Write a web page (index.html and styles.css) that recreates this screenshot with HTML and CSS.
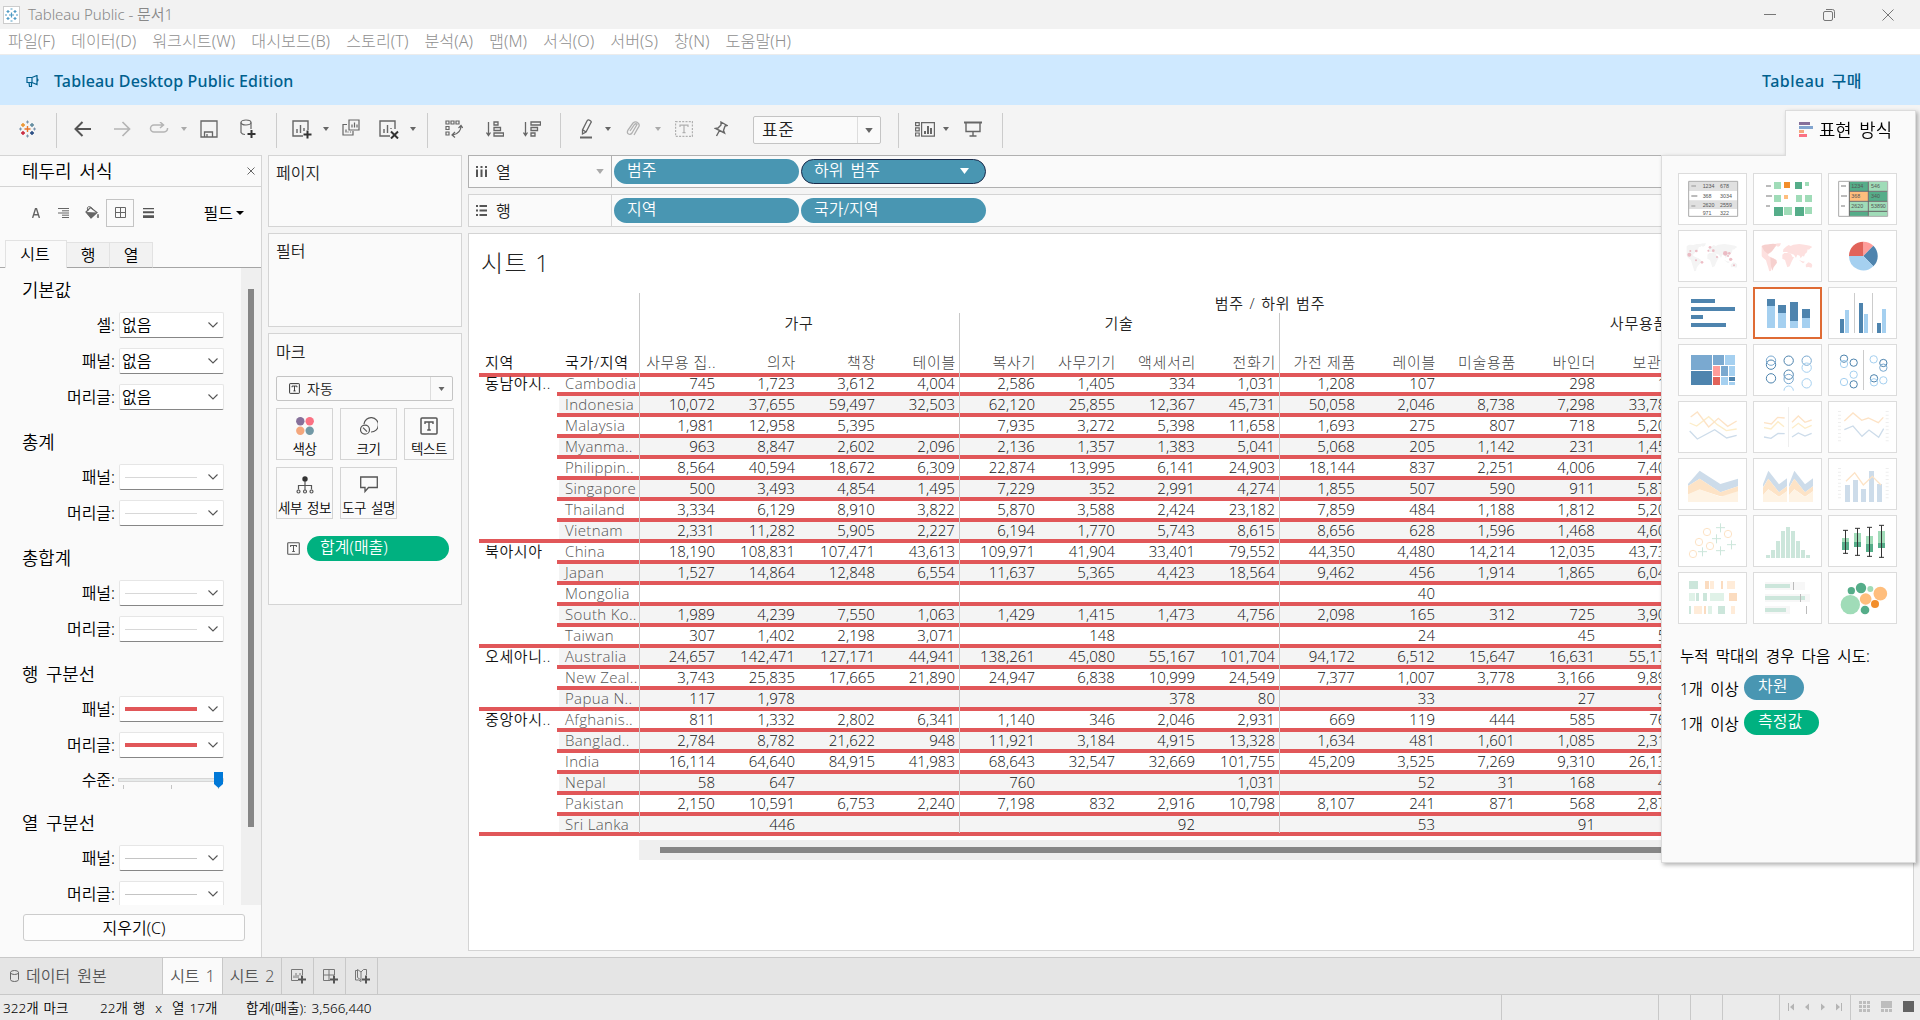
FILE: index.html
```html
<!DOCTYPE html>
<html lang="ko">
<head>
<meta charset="utf-8">
<title>Tableau Public - 문서1</title>
<link rel="stylesheet" href="styles.css">
</head>
<body>
<svg class="defs" width="0" height="0">
  <symbol id="caret" viewBox="0 0 6 4"><path d="M0 0h6L3 4z" fill="currentColor"/></symbol>
  <symbol id="chev" viewBox="0 0 10 6"><path d="M.5 .5L5 5L9.500 .5" fill="none" stroke="#555" stroke-width="1.100"/></symbol>
  <symbol id="tbox" viewBox="0 0 18 18"><rect x="1" y="1" width="16" height="16" rx="1" fill="none" stroke="currentColor" stroke-width="1.500"/><path d="M5 7V5h8v2M9 5v8M7.200 13h3.600" fill="none" stroke="currentColor" stroke-width="1.400"/></symbol>
  <symbol id="world" viewBox="0 0 152 84"><path d="M0 8l8-4 12 1 10-3 14-1 4 3-6 6-6 2-2 8-8 6-4 6-4 2 4 5 6 3 8 3 8 6-2 8-6 6-6 8-2 10-5 2-3-12-4-12-3-10-8-7-6-6-5-8-3-10-4-6zM44 0l14-1-3 8-7 4zM62 34l6-5 12 0 8 3 4 8 5 2-5 9-4 8-4 10-7 3-4-12-3-10-8-4zM64 26l1-8 8-8 8-5 6 3 8-4 18-2 16 2 16 3 7 4-6 4-4 4-4-1-2 9-6 5-3 8-4-3-6 8-3-8-7-3-4 10-6-10-8-3-8-2-6-3zM132 64l8-7 8 3 5 6-4 7-8-2-8 1zM112 50l10 4 8 1-6 5z"/></symbol>
</svg>

<header class="titlebar">
  <svg class="app-icon" width="17" height="18" viewBox="0 0 17 18"><rect x=".5" y=".5" width="16" height="17" fill="#fff" stroke="#ccc"/><g stroke="#4f9bc4" stroke-width="1.200"><path d="M6 9h5M8.500 6.500v5M3.500 5.500h3M5 4v3M10.500 5.500h3M12 4v3M3.500 12.500h3M5 11v3M10.500 12.500h3M12 11v3M7.500 3h2M7.500 15h2M2 9h2M13 9h2"/></g></svg>
  <span>Tableau Public - 문서1</span>
  <div class="window-buttons">
    <svg width="12" height="12" viewBox="0 0 12 12"><path d="M0 5.500h12" stroke="#777"/></svg>
    <svg width="12" height="12" viewBox="0 0 12 12" fill="none" stroke="#777"><rect x=".5" y="2.500" width="9" height="9" rx="1.500"/><path d="M3 .5h6.500a2 2 0 0 1 2 2V9"/></svg>
    <svg width="12" height="12" viewBox="0 0 12 12" stroke="#777"><path d="M.5 .5l11 11M11.500 .5l-11 11"/></svg>
  </div>
</header>
<nav class="menubar">
  <span>파일(F)</span><span>데이터(D)</span><span>워크시트(W)</span><span>대시보드(B)</span><span>스토리(T)</span><span>분석(A)</span><span>맵(M)</span><span>서식(O)</span><span>서버(S)</span><span>창(N)</span><span>도움말(H)</span>
</nav>
<div class="banner">
  <svg width="14" height="12" viewBox="0 0 14 12" fill="none" stroke="#00608e" stroke-width="1.200"><path d="M1 2.500h5l5-2v9l-5-2H1zM6 2.500v5M3 7.500l.5 4h2v-4M11 3.500q2 1.500 0 3"/></svg>
  <b>Tableau Desktop Public Edition</b>
  <b class="buy">Tableau 구매</b>
</div>

<div class="toolbar">
  <div class="group g1">
    <svg width="17" height="18" viewBox="0 0 17 18" stroke-width="1.400"><path d="M5.500 9h6M8.500 6v6" stroke="#e8762c"/><path d="M2 5h4M4 3v4" stroke="#eb9129"/><path d="M11 5h4M13 3v4" stroke="#5b879b"/><path d="M2 13h4M4 11v4" stroke="#c72037"/><path d="M11 13h4M13 11v4" stroke="#1f447e"/><path d="M7 2h3M8.500 .5v3M7 16h3M8.500 14.500v3M0 9h3M1.500 7.500v3M14 9h3M15.500 7.500v3" stroke="#7b93ab" stroke-width="1"/></svg>
  </div>
  <div class="group g2">
    <svg width="18" height="16" viewBox="0 0 18 16" fill="none" stroke="#555" stroke-width="2"><path d="M17 8H2M8.500 1L1.500 8l7 7"/></svg>
    <svg width="18" height="16" viewBox="0 0 18 16" fill="none" stroke="#b4b4b4" stroke-width="1.700"><path d="M1 8h15M9.500 1l7 7-7 7"/></svg>
    <svg class="lift" width="20" height="11" viewBox="0 0 20 11" fill="none" stroke="#b4b4b4" stroke-width="1.500"><path d="M14 3H5a3.500 3.500 0 0 0 0 7h10a3.500 3.500 0 0 0 3.500-4M11 0l3.500 3L11 6"/></svg>
    <svg class="dim" width="6" height="4"><use href="#caret"/></svg>
    <svg width="18" height="18" viewBox="0 0 18 18" fill="none" stroke="#666" stroke-width="1.300"><path d="M1 1h16v16H1zM4.500 17v-5h8v5M7 17v-3"/></svg>
    <svg width="16" height="20" viewBox="0 0 16 20" fill="none" stroke="#666" stroke-width="1.200"><ellipse cx="6" cy="3.500" rx="5" ry="2.500"/><path d="M1 3.500v10q1 2 4 2M11 3.500V10"/><path d="M11.500 11v8M7.500 15h8" stroke="#333" stroke-width="2"/></svg>
  </div>
  <div class="group g3">
    <svg width="20" height="19" viewBox="0 0 20 19" fill="none" stroke="#666" stroke-width="1.400"><path d="M11 16H1V1h15v9M5 13V9M8.500 13V5M12 11V8"/><path d="M15.500 10.500v8M11.500 14.500h8" stroke="#333" stroke-width="2"/></svg>
    <svg width="6" height="4"><use href="#caret"/></svg>
    <svg class="lift" width="18" height="17" viewBox="0 0 18 17" fill="none" stroke="#666" stroke-width="1.200"><path d="M5 5.500H1v10.500h10v-4M7 1h10v10H7zM4 13.500v-3M6 13.500v-1M8.500 13.500v-1M10 8.500v-3M12.500 8.500v-5M15 8.500v-3"/></svg>
    <svg width="20" height="19" viewBox="0 0 20 19" fill="none" stroke="#666" stroke-width="1.400"><path d="M11 16H1V1h15v8M5 13V9M8.500 13V5M12 9V8"/><path d="M12 11.500l7 7M19 11.500l-7 7" stroke="#333" stroke-width="2"/></svg>
    <svg width="6" height="4"><use href="#caret"/></svg>
  </div>
  <div class="group g4">
    <svg width="18" height="18" viewBox="0 0 18 18" fill="none" stroke="#666" stroke-width="1.200"><path d="M1 1h3v3H1zM6 1h3v3H6zM11 1h3v3h-3zM1 6.500h3v3H1zM1 12h3v3H1zM16 6q0 7-8 9M13.500 8L16 5.500 17.700 8M10 12l-3 3 3 2.500"/></svg>
    <svg width="18" height="16" viewBox="0 0 18 16" fill="none" stroke="#666" stroke-width="1.300"><path d="M2.500 1v13M.5 11.500l2 3 2-3M8 1h4v3H8zM8 6.500h6.500v3H8zM8 12h9.500v3H8z"/></svg>
    <svg width="18" height="16" viewBox="0 0 18 16" fill="none" stroke="#666" stroke-width="1.300"><path d="M2.500 1v13M.5 11.500l2 3 2-3M8 1h9.500v3H8zM8 6.500h6.500v3H8zM8 12h4v3H8z"/></svg>
  </div>
  <div class="group g5">
    <svg width="14" height="20" viewBox="0 0 14 20" fill="none" stroke="#666" stroke-width="1.300"><path d="M8 2q1-2 3-.5t1 2L7 13l-3.500 2V11zM4 11l3 2"/><path d="M1 18.500h12" stroke-width="2"/></svg>
    <svg width="6" height="4"><use href="#caret"/></svg>
    <svg width="14" height="16" viewBox="0 0 14 16" fill="none" stroke="#b0b0b0" stroke-width="1.300"><path d="M4 10l4.500-6.500q1.500-1.500 2.500 0L6 12q-1.500 2-3.500 1T2 9l5-7q2.500-2.200 5 0t0 5L8 14"/></svg>
    <svg class="dim" width="6" height="4"><use href="#caret"/></svg>
    <svg width="18" height="16" viewBox="0 0 18 16" fill="none" stroke="#b0b0b0" stroke-width="1.200"><path d="M.6.6h16.800v14.800H.6z" stroke-dasharray="2 1.300"/><path d="M5 6V4.200h8V6M9 4.200v7.500M7.500 11.700h3"/></svg>
    <svg width="14" height="16" viewBox="0 0 14 16" fill="none" stroke="#666" stroke-width="1.400"><path d="M7 1l6 3.500-2 .5-1.500 4.500 1 2.500L1.500 7.500 4 7l3-3zM5.500 9.500L2.500 15"/></svg>
    <div class="combo"><span>표준</span><i><svg width="8" height="5"><use href="#caret"/></svg></i></div>
  </div>
  <div class="group g6">
    <svg width="20" height="15" viewBox="0 0 20 15" fill="none" stroke="#666" stroke-width="1.200"><path d="M.6.6h3.600v3H.6zM.6 5.800h3.600v3H.6zM.6 11h3.600v3H.6zM6.600.6h12.800v13.600H6.600z"/><path d="M10 12V9M13 12V4M16 12V6" stroke-width="2"/></svg>
    <svg width="6" height="4"><use href="#caret"/></svg>
    <svg width="18" height="16" viewBox="0 0 18 16" fill="none" stroke="#666" stroke-width="1.400"><path d="M0 1.500h18" stroke-width="2"/><path d="M2 2v8.500h14V2M9 10.500V15M5.500 15h7"/></svg>
  </div>
</div>

<main class="main">
  <aside class="format">
    <div class="format-title"><span>테두리 서식</span><svg width="8" height="8" viewBox="0 0 8 8" stroke="#666"><path d="M.5.5l7 7M7.500.5l-7 7"/></svg></div>
    <div class="format-icons">
      <svg width="8" height="10" viewBox="0 0 8 10" fill="none" stroke="#666" stroke-width="1.400"><path d="M.6 10L3.500.8h1L7.400 10M1.700 6.800h4.600"/></svg>
      <svg width="11" height="10" viewBox="0 0 11 10" stroke="#666"><path d="M0 .5h11M4 2.800h7M0 5h11M4 7.200h7M4 9.500h7"/></svg>
      <svg width="14" height="13" viewBox="0 0 14 13"><path d="M1 6l4.500-4.500 6.500 5L6 12z" fill="none" stroke="#666" stroke-width="1.200"/><path d="M1 6l11 .5L6 12.500z" fill="#666"/><path d="M3 5Q1 0 5 .8q2 .5 3 3" fill="none" stroke="#666"/><path d="M13 8q1.500 3.500 0 4-1.500-.5 0-4" fill="#666" stroke="#666" stroke-width=".6"/></svg>
      <span class="sel"><svg width="11" height="11" viewBox="0 0 11 11" fill="none" stroke="#666"><path d="M.5.5h10v10H.5zM5.500 0v11M0 5.500h11"/></svg></span>
      <svg width="11" height="10" viewBox="0 0 11 10" fill="#555"><path d="M0 0h11v1.300H0zM0 3.300h11v2H0zM0 7.200h11V10H0z"/></svg>
      <span class="fields">필드<svg width="8" height="4" viewBox="0 0 8 4"><path d="M0 0h8L4 4z"/></svg></span>
    </div>
    <div class="format-tabs"><span class="on">시트</span><span>행</span><span>열</span><i></i></div>
    <div class="format-body">
      <div class="format-list">
        <h3>기본값</h3>
        <div class="field"><label>셀:</label><div class="select"><span>없음</span><svg width="10" height="6"><use href="#chev"/></svg></div></div>
        <div class="field"><label>패널:</label><div class="select"><span>없음</span><svg width="10" height="6"><use href="#chev"/></svg></div></div>
        <div class="field"><label>머리글:</label><div class="select"><span>없음</span><svg width="10" height="6"><use href="#chev"/></svg></div></div>
        <h3>총계</h3>
        <div class="field"><label>패널:</label><div class="select"><hr><svg width="10" height="6"><use href="#chev"/></svg></div></div>
        <div class="field"><label>머리글:</label><div class="select"><hr><svg width="10" height="6"><use href="#chev"/></svg></div></div>
        <h3>총합계</h3>
        <div class="field"><label>패널:</label><div class="select"><hr><svg width="10" height="6"><use href="#chev"/></svg></div></div>
        <div class="field"><label>머리글:</label><div class="select"><hr><svg width="10" height="6"><use href="#chev"/></svg></div></div>
        <h3>행 구분선</h3>
        <div class="field"><label>패널:</label><div class="select"><hr class="red"><svg width="10" height="6"><use href="#chev"/></svg></div></div>
        <div class="field"><label>머리글:</label><div class="select"><hr class="red"><svg width="10" height="6"><use href="#chev"/></svg></div></div>
        <div class="field level"><label>수준:</label><svg width="106" height="23" viewBox="0 0 106 23"><path d="M.5 10.500h105v3H.5z" fill="#e7eaea" stroke="#d6d6d6"/><path d="M5.500 17v4M53.500 17v4M100.500 19v2" stroke="#c4c4c4"/><path d="M96 4h9v12l-4.500 4L96 16z" fill="#0078d7"/></svg></div>
        <h3>열 구분선</h3>
        <div class="field"><label>패널:</label><div class="select"><hr class="mid"><svg width="10" height="6"><use href="#chev"/></svg></div></div>
        <div class="field"><label>머리글:</label><div class="select"><hr class="mid"><svg width="10" height="6"><use href="#chev"/></svg></div></div>
      </div>
      <div class="vscroll"><i></i></div>
    </div>
    <div class="clear">지우기(C)</div>
  </aside>

  <section class="cards">
    <div class="card pages">페이지</div>
    <div class="card filters">필터</div>
    <div class="card marks">
      <span>마크</span>
      <div class="mark-type"><svg width="11" height="11"><use href="#tbox"/></svg><span>자동</span><i><svg width="7" height="4"><use href="#caret"/></svg></i></div>
      <div class="mark-grid">
        <div><svg width="18" height="18" viewBox="0 0 18 18"><circle cx="4.300" cy="4.300" r="4.200" fill="#86709a"/><circle cx="13.700" cy="4.300" r="4.200" fill="#fb7183"/><circle cx="4.300" cy="13.700" r="4.200" fill="#f4a77d"/><circle cx="13.700" cy="13.700" r="4.200" fill="#7299a6"/></svg>색상</div>
        <div><svg width="18" height="18" viewBox="0 0 18 18" fill="none" stroke="#555" stroke-width="1.200"><path d="M4 7A7.200 7.200 0 1 1 11 15"/><circle cx="5" cy="12.700" r="4.500"/><path d="M3 10.700l4 4"/></svg>크기</div>
        <div><svg width="18" height="18"><use href="#tbox"/></svg>텍스트</div>
        <div><svg width="18" height="18" viewBox="0 0 18 18" fill="none" stroke="#555" stroke-width="1.200"><circle cx="9" cy="3" r="2.700" fill="#333" stroke="none"/><path d="M9 5v9M2.500 13.500V9.500h13v4"/><circle cx="2.500" cy="15.500" r="1.500"/><circle cx="9" cy="15.500" r="1.500"/><circle cx="15.500" cy="15.500" r="1.500"/></svg>세부 정보</div>
        <div><svg width="18" height="18" viewBox="0 0 18 18" fill="none" stroke="#555" stroke-width="1.300"><path d="M.7 1h16.600v10.500H8.500L5 15.500v-4H.7z"/></svg>도구 설명</div>
      </div>
      <div class="mark-pill"><svg width="13" height="13"><use href="#tbox"/></svg><span class="pill green">합계(매출)</span></div>
    </div>
  </section>

  <section class="work">
    <div class="shelf active">
      <div class="shelf-label"><svg width="11" height="11" viewBox="0 0 11 11" fill="#555"><path d="M0 0h2v2H0zM0 3.500h2V11H0zM4.500 0h2v2h-2zM4.500 3.500h2V11h-2zM9 0h2v2H9zM9 3.500h2V11H9z"/></svg><span>열</span><svg class="dim" width="8" height="5"><use href="#caret"/></svg></div>
      <span class="pill">범주</span><span class="pill picked">하위 범주<svg width="9" height="6"><use href="#caret"/></svg></span>
    </div>
    <div class="shelf">
      <div class="shelf-label"><svg width="11" height="11" viewBox="0 0 11 11" fill="#555"><path d="M0 0h2v2H0zM3.500 0H11v2H3.500zM0 4.500h2v2H0zM3.500 4.500H11v2H3.500zM0 9h2v2H0zM3.500 9H11v2H3.500z"/></svg><span>행</span></div>
      <span class="pill">지역</span><span class="pill">국가/지역</span>
    </div>
    <div class="sheet">
      <h1>시트 1</h1>
      <div class="xtab">
        <div class="super"><span>범주 / 하위 범주</span></div>
        <div class="cats"><span>가구</span><span>기술</span><span>사무용품</span></div>
        <div class="heads"><b>지역</b><b>국가/지역</b><span class="first">사무용 집..</span><span>의자</span><span>책장</span><span>테이블</span><span>복사기</span><span>사무기기</span><span>액세서리</span><span>전화기</span><span>가전 제품</span><span>레이블</span><span>미술용품</span><span>바인더</span><span>보관함</span></div>
        <div class="region"><b>동남아시..</b><div class="rows">
          <div class="r"><em>Cambodia</em><i>745</i><i>1,723</i><i>3,612</i><i>4,004</i><i>2,586</i><i>1,405</i><i>334</i><i>1,031</i><i>1,208</i><i>107</i><i></i><i>298</i><i>15</i><i></i></div>
          <div class="r"><em>Indonesia</em><i>10,072</i><i>37,655</i><i>59,497</i><i>32,503</i><i>62,120</i><i>25,855</i><i>12,367</i><i>45,731</i><i>50,058</i><i>2,046</i><i>8,738</i><i>7,298</i><i>33,785</i><i></i></div>
          <div class="r"><em>Malaysia</em><i>1,981</i><i>12,958</i><i>5,395</i><i></i><i>7,935</i><i>3,272</i><i>5,398</i><i>11,658</i><i>1,693</i><i>275</i><i>807</i><i>718</i><i>5,205</i><i></i></div>
          <div class="r"><em>Myanma..</em><i>963</i><i>8,847</i><i>2,602</i><i>2,096</i><i>2,136</i><i>1,357</i><i>1,383</i><i>5,041</i><i>5,068</i><i>205</i><i>1,142</i><i>231</i><i>1,455</i><i></i></div>
          <div class="r"><em>Philippin..</em><i>8,564</i><i>40,594</i><i>18,672</i><i>6,309</i><i>22,874</i><i>13,995</i><i>6,141</i><i>24,903</i><i>18,144</i><i>837</i><i>2,251</i><i>4,006</i><i>7,405</i><i></i></div>
          <div class="r"><em>Singapore</em><i>500</i><i>3,493</i><i>4,854</i><i>1,495</i><i>7,229</i><i>352</i><i>2,991</i><i>4,274</i><i>1,855</i><i>507</i><i>590</i><i>911</i><i>5,875</i><i></i></div>
          <div class="r"><em>Thailand</em><i>3,334</i><i>6,129</i><i>8,910</i><i>3,822</i><i>5,870</i><i>3,588</i><i>2,424</i><i>23,182</i><i>7,859</i><i>484</i><i>1,188</i><i>1,812</i><i>5,205</i><i></i></div>
          <div class="r"><em>Vietnam</em><i>2,331</i><i>11,282</i><i>5,905</i><i>2,227</i><i>6,194</i><i>1,770</i><i>5,743</i><i>8,615</i><i>8,656</i><i>628</i><i>1,596</i><i>1,468</i><i>4,605</i><i></i></div>
        </div></div>
        <div class="region"><b>북아시아</b><div class="rows">
          <div class="r"><em>China</em><i>18,190</i><i>108,831</i><i>107,471</i><i>43,613</i><i>109,971</i><i>41,904</i><i>33,401</i><i>79,552</i><i>44,350</i><i>4,480</i><i>14,214</i><i>12,035</i><i>43,735</i><i></i></div>
          <div class="r"><em>Japan</em><i>1,527</i><i>14,864</i><i>12,848</i><i>6,554</i><i>11,637</i><i>5,365</i><i>4,423</i><i>18,564</i><i>9,462</i><i>456</i><i>1,914</i><i>1,865</i><i>6,045</i><i></i></div>
          <div class="r"><em>Mongolia</em><i></i><i></i><i></i><i></i><i></i><i></i><i></i><i></i><i></i><i>40</i><i></i><i></i><i></i><i></i></div>
          <div class="r"><em>South Ko..</em><i>1,989</i><i>4,239</i><i>7,550</i><i>1,063</i><i>1,429</i><i>1,415</i><i>1,473</i><i>4,756</i><i>2,098</i><i>165</i><i>312</i><i>725</i><i>3,905</i><i></i></div>
          <div class="r"><em>Taiwan</em><i>307</i><i>1,402</i><i>2,198</i><i>3,071</i><i></i><i>148</i><i></i><i></i><i></i><i>24</i><i></i><i>45</i><i>55</i><i></i></div>
        </div></div>
        <div class="region"><b>오세아니..</b><div class="rows">
          <div class="r"><em>Australia</em><i>24,657</i><i>142,471</i><i>127,171</i><i>44,941</i><i>138,261</i><i>45,080</i><i>55,167</i><i>101,704</i><i>94,172</i><i>6,512</i><i>15,647</i><i>16,631</i><i>55,175</i><i></i></div>
          <div class="r"><em>New Zeal..</em><i>3,743</i><i>25,835</i><i>17,665</i><i>21,890</i><i>24,947</i><i>6,838</i><i>10,999</i><i>24,549</i><i>7,377</i><i>1,007</i><i>3,778</i><i>3,166</i><i>9,895</i><i></i></div>
          <div class="r"><em>Papua N..</em><i>117</i><i>1,978</i><i></i><i></i><i></i><i></i><i>378</i><i>80</i><i></i><i>33</i><i></i><i>27</i><i>95</i><i></i></div>
        </div></div>
        <div class="region"><b>중앙아시..</b><div class="rows">
          <div class="r"><em>Afghanis..</em><i>811</i><i>1,332</i><i>2,802</i><i>6,341</i><i>1,140</i><i>346</i><i>2,046</i><i>2,931</i><i>669</i><i>119</i><i>444</i><i>585</i><i>765</i><i></i></div>
          <div class="r"><em>Banglad..</em><i>2,784</i><i>8,782</i><i>21,622</i><i>948</i><i>11,921</i><i>3,184</i><i>4,915</i><i>13,328</i><i>1,634</i><i>481</i><i>1,601</i><i>1,085</i><i>2,315</i><i></i></div>
          <div class="r"><em>India</em><i>16,114</i><i>64,640</i><i>84,915</i><i>41,983</i><i>68,643</i><i>32,547</i><i>32,669</i><i>101,755</i><i>45,209</i><i>3,525</i><i>7,269</i><i>9,310</i><i>26,135</i><i></i></div>
          <div class="r"><em>Nepal</em><i>58</i><i>647</i><i></i><i></i><i>760</i><i></i><i></i><i>1,031</i><i></i><i>52</i><i>31</i><i>168</i><i>45</i><i></i></div>
          <div class="r"><em>Pakistan</em><i>2,150</i><i>10,591</i><i>6,753</i><i>2,240</i><i>7,198</i><i>832</i><i>2,916</i><i>10,798</i><i>8,107</i><i>241</i><i>871</i><i>568</i><i>2,875</i><i></i></div>
          <div class="r"><em>Sri Lanka</em><i></i><i>446</i><i></i><i></i><i></i><i></i><i>92</i><i></i><i></i><i>53</i><i></i><i>91</i><i></i><i></i></div>
        </div></div>
        <u class="rule r1"></u><u class="rule r2"></u><u class="rule r3"></u>
      </div>
      <div class="hscroll"><i></i></div>
    </div>
  </section>
</main>

<footer class="tabs">
  <div class="source"><svg width="9" height="12" viewBox="0 0 9 12" fill="none" stroke="#666"><ellipse cx="4.500" cy="2.500" rx="4" ry="2"/><path d="M.5 2.500v7q0 2 4 2t4-2v-7"/></svg><span>데이터 원본</span></div>
  <div class="tab on">시트 1</div>
  <div class="tab">시트 2</div>
  <div class="new"><svg width="16" height="16" viewBox="0 0 16 16" fill="none" stroke="#777"><path d="M8 12.500H1.500V1.500h11V7M4 10V7.500M6 10V5M8 10V7M10 7.500V5"/><path d="M12 7.500v8M8 11.500h8" stroke="#555" stroke-width="2"/></svg></div>
  <div class="new"><svg width="16" height="16" viewBox="0 0 16 16" fill="none" stroke="#777"><path d="M8 12.500H1.500V1.500h11V7M1 7h11M7 1.500v11"/><path d="M12 7.500v8M8 11.500h8" stroke="#555" stroke-width="2"/></svg></div>
  <div class="new"><svg width="16" height="16" viewBox="0 0 16 16" fill="none" stroke="#777"><path d="M7 13.500L4.500 12H1.500V2.500h2M7 13.500V4L3.500 1.500v8L7 12M7 4l2.500-2.500h3V7"/><path d="M12 7.500v8M8 11.500h8" stroke="#555" stroke-width="2"/></svg></div>
</footer>
<div class="status">
  <span class="s1">322개 마크</span><span class="s2">22개 행 &nbsp;x &nbsp;열 17개</span><span class="s3">합계(매출): 3,566,440</span>
  <div class="status-right"><i></i><i></i><i></i><i></i>
    <div class="nav"><svg width="54" height="8" viewBox="0 0 54 8" fill="#b4b4b4"><path d="M0 0h1v8H0zM6 .5v7L2 4zM21 .5v7L17 4zM33 .5v7l4-3.500zM48 .5v7l4-3.500zM53 0h1v8h-1z"/></svg></div>
    <div class="views"><svg width="55" height="11" viewBox="0 0 55 11" fill="#bdbdbd"><path d="M0 0h3v3H0zM4 0h3v3H4zM8 0h3v3H8zM0 4h3v3H0zM4 4h3v3H4zM8 4h3v3H8zM0 8h3v3H0zM4 8h3v3H4zM8 8h3v3H8zM22 0h11v7H22zM22 8h3v3h-3zM26 8h3v3h-3zM30 8h3v3h-3z"/><path d="M44 0h11v11H44z" fill="#636363"/></svg></div>
  </div>
</div>

<aside class="showme">
  <div class="showme-tab"><svg width="14" height="15" viewBox="0 0 14 15"><path d="M0 0h11v3H0z" fill="#86709a"/><path d="M0 4h14v3H0z" fill="#82a5cf"/><path d="M0 8h5v3H0z" fill="#f4a77d"/><path d="M0 12h8v3H0z" fill="#fb7183"/></svg><span>표현 방식</span></div>
  <div class="showme-body">
    <div class="charts">
      <svg viewBox="0 0 207 156"><path d="M32 26h146v104H32z" fill="#fff"/><path d="M32 26h146v28H32zM32 82h146v26H32z" fill="#e0e0e0"/><path d="M32 25h147v105H32z" fill="none" stroke="#aaa" stroke-width="3"/><path d="M40 36h14v6H40zM40 66h18v6H40zM40 96h12v6H40z" fill="#bbb"/><g class="mini"><text x="74" y="46">1234</text><text x="126" y="46">678</text><text x="74" y="74">368</text><text x="126" y="74">3034</text><text x="74" y="101">2620</text><text x="126" y="101">2559</text><text x="74" y="125">971</text><text x="126" y="125">322</text></g></svg>
      <svg viewBox="0 0 207 156"><path d="M39 36h15v6H39zM39 66h18v6H39zM39 96h12v6H39z" fill="#bbb"/><path d="M63 27h21v21H63zM156 27h12v12h-12zM63 66h21v21H63zM129 66h18v21h-18zM156 66h21v21h-21zM93 102h24v24H93zM156 102h21v21h-21z" fill="#a0dcb8"/><path d="M126 27h21v21h-21zM63 102h27v27H63zM126 102h27v27h-27z" fill="#55ad89"/><path d="M93 27h18v18H93z" fill="#f28e2b"/><path d="M93 66h12v12H93z" fill="#ffbe7d"/></svg>
      <svg viewBox="0 0 207 156"><path d="M64 26h56v28H64zM122 56h56v28h-56zM64 116h56v14H64z" fill="#55ad89"/><path d="M122 26h56v28h-56zM64 86h56v28H64zM122 86h56v44h-56z" fill="#a0dcb8"/><path d="M64 56h56v28H64z" fill="#ffbe7d"/><path d="M64 25v105M121 25v105M64 55h115M64 85h115M64 115h115" stroke="#666" stroke-width="3"/><path d="M32 25h147v105H32z" fill="none" stroke="#aaa" stroke-width="3"/><path d="M39 36h15v6H39zM39 66h18v6H39zM39 96h12v6H39z" fill="#bbb"/><g class="mini"><text x="70" y="45">1234</text><text x="129" y="45">546</text><text x="70" y="76">368</text><text x="129" y="76">340</text><text x="70" y="106">2620</text><text x="129" y="106">53890</text></g></svg>
      <svg viewBox="0 0 207 156"><use href="#world" x="26" y="40" width="152" height="84" fill="#f4f4f4"/><g fill="#e8a9b4" opacity=".75"><circle cx="34" cy="74" r="6"/><circle cx="37" cy="63" r="3"/><circle cx="55" cy="63" r="4"/><circle cx="96" cy="52" r="4"/><circle cx="106" cy="62" r="4"/><circle cx="91" cy="62" r="3"/><circle cx="142" cy="70" r="7"/><circle cx="154" cy="70" r="4"/><circle cx="158" cy="88" r="5"/><circle cx="117" cy="81" r="3"/><circle cx="54" cy="91" r="3"/><circle cx="72" cy="97" r="4"/><circle cx="168" cy="106" r="3"/><circle cx="150" cy="78" r="3"/></g></svg>
      <svg viewBox="0 0 207 156"><use href="#world" x="26" y="40" width="152" height="84" fill="#fde0df"/><path d="M26 48l10-4 24-3 10 2-6 12-10 12-10 4-10-8zM52 82l18 8 2 8-10 14-4 10-4-14z" fill="#f6d0ce"/></svg>
      <svg viewBox="0 0 207 156"><path d="M106 78V35A43 43 0 0 1 136 47z" fill="#ff9d9a"/><path d="M106 78L136 47A43 43 0 0 1 136 109z" fill="#4e84ae"/><path d="M106 78L136 109A43 43 0 0 1 63 78z" fill="#a5d0f0"/><path d="M106 78H63A43 43 0 0 1 106 35z" fill="#e1635a"/></svg>
      <svg viewBox="0 0 207 156"><path d="M39 36h72v12H39zM39 60h132v12H39zM39 84h36v12H39zM39 108h105v12H39z" fill="#4e84ae"/></svg>
      <svg class="chosen" viewBox="0 0 207 156"><path d="M42 57h24v66H42zM75 78h24v45H75zM111 102h24v21h-24zM147 93h24v30h-24z" fill="#a5d0f0"/><path d="M42 36h24v21H42zM75 54h24v24H75zM111 45h24v57h-24zM147 66h24v27h-24z" fill="#4e84ae"/></svg>
      <svg viewBox="0 0 207 156"><path d="M51 69h12v69H51zM108 81h12v57h-12zM162 66h12v72h-12z" fill="#a5d0f0"/><path d="M36 96h12v42H36zM93 48h12v90H93zM147 108h12v30h-12z" fill="#4e84ae"/><path d="M79.500 18v120M133.500 18v120" stroke="#ccc" stroke-width="3"/></svg>
      <svg viewBox="0 0 207 156"><path d="M39 33h63v45H39zM105 33h33v30h-33zM129 66h21v30h-21z" fill="#7aa9d0"/><path d="M39 81h63v42H39zM153 99h18v12h-18z" fill="#4e84ae"/><path d="M141 33h30v30h-30zM153 66h18v30h-18zM129 99h21v24h-21zM153 114h18v9h-18z" fill="#a5d0f0"/><path d="M105 66h21v30h-21z" fill="#ff9d9a"/><path d="M105 99h21v24h-21z" fill="#e1635a"/></svg>
      <svg viewBox="0 0 207 156" fill="none" stroke-width="3"><g stroke="#4e84ae"><circle cx="54" cy="62" r="14"/><circle cx="54" cy="103" r="14"/><circle cx="107" cy="50" r="14"/><circle cx="107" cy="92" r="14"/></g><g stroke="#7aa9d0"><circle cx="54" cy="50" r="14"/><circle cx="107" cy="105" r="14"/><circle cx="161" cy="50" r="14"/></g><g stroke="#a5d0f0"><circle cx="161" cy="71" r="14"/><circle cx="161" cy="118" r="14"/><path d="M93 140a14 14 0 0 1 28 0"/></g></svg>
      <svg viewBox="0 0 207 156" fill="none" stroke-width="3"><path d="M106.500 18v120" stroke="#ccc"/><g stroke="#4e84ae"><circle cx="48" cy="44" r="11"/><circle cx="77" cy="56" r="11"/><circle cx="77" cy="121" r="11"/><circle cx="166" cy="57" r="11"/><circle cx="138" cy="103" r="11"/></g><g stroke="#a5d0f0"><circle cx="48" cy="60" r="11"/><circle cx="77" cy="92" r="11"/><circle cx="48" cy="114" r="11"/><circle cx="137" cy="46" r="11"/><circle cx="138" cy="115" r="11"/><circle cx="166" cy="109" r="11"/></g><circle cx="166" cy="71" r="11" stroke="#7aa9d0"/></svg>
      <svg viewBox="0 0 207 156" fill="none" stroke-width="4"><path d="M35 66l21 9 36-28 26 24 27 18 31-5" stroke="#fdedc9"/><path d="M38 48l20-15 34 45 29-26 28 24 27-16" stroke="#fde3c6"/><path d="M35 90l23 24 52-28 36 25 30-8" stroke="#cddcea"/></svg>
      <svg viewBox="0 0 207 156" fill="none" stroke-width="4"><path d="M106.500 18v120" stroke="#eee" stroke-width="3"/><path d="M33 80l21 4 21-22 18 15M117 82l19-15 20 15 20-9" stroke="#fdedc9"/><path d="M33 65l22 4 19-20 21 2M117 64l19-19 20 19 20-7" stroke="#fde3c6"/><path d="M33 108l21 4 21-15 20 1M117 108l19-12 20 9 20-8" stroke="#cddcea"/></svg>
      <svg viewBox="0 0 207 156" fill="none" stroke-width="4"><path d="M49 60l26-24 26 22 20-7 30 14 15-16" stroke="#fde3c6"/><path d="M49 86l26-11 27 31 21-19 29 22 15-26" stroke="#cddcea"/><path d="M34.500 30v94M177.500 30v94" stroke="#eee" stroke-width="9" stroke-dasharray="3 8"/></svg>
      <svg viewBox="0 0 207 156"><path d="M30 78l35-40 62 40 53-16v23l-53 18-62-41-35 22z" fill="#cddcea"/><path d="M30 84l35-22 62 41 53-18v30l-53 0-62-20-35 15z" fill="#fde3c6"/><path d="M30 109l35-15 62 22 53-16v32H30z" fill="#fef3e4"/></svg>
      <svg viewBox="0 0 207 156"><path d="M30 79l16-41 32 41 24-18v24l-24 18-32-41-16 26zM108 79l16-41 32 41 24-18v24l-24 18-32-41-16 26z" fill="#cddcea"/><path d="M30 89l16-27 32 41 24-18v15l-24 16-32-22-16 18zM108 89l16-27 32 41 24-18v15l-24 16-32-22-16 18z" fill="#fde3c6"/><path d="M30 111l16-17 32 24 24-18v32H30zM108 111l16-17 32 24 24-18v32h-72z" fill="#fef3e4"/></svg>
      <svg viewBox="0 0 207 156"><path d="M51 81h15v51H51zM75 66h15v66H75zM99 93h15v39H99zM123 39h15v93h-15zM147 78h15v54h-15z" fill="#cddcea"/><path d="M54 70l26-26 26 37 27-26 26 26" fill="none" stroke="#fde3c6" stroke-width="4"/><path d="M34.500 30v94M177.500 30v94" stroke="#eee" stroke-width="9" stroke-dasharray="3 8"/></svg>
      <svg viewBox="0 0 207 156" fill="none" stroke-width="3"><g stroke="#fde3c6"><circle cx="87" cy="51" r="11"/><circle cx="150" cy="57" r="11"/><circle cx="63" cy="81" r="11"/><circle cx="96" cy="93" r="11"/><circle cx="45" cy="117" r="11"/></g><path d="M114 38h27M127.500 25v27M102 71h27M115.500 58v27M147 89h27M160.500 76v27M60 110h27M73.500 97v27M114 107h27M127.500 94v27" stroke="#cce6db"/></svg>
      <svg viewBox="0 0 207 156"><path d="M39 120h12v9H39zM54 105h12v24H54zM69 78h12v51H69zM84 48h12v81H84zM99 36h12v93H99zM114 48h12v81h-12zM129 78h12v51h-12zM144 105h12v24h-12zM159 120h12v9h-12z" fill="#cce6db"/></svg>
      <svg viewBox="0 0 207 156"><path d="M42 69h21v12H42zM78 54h21v27H78zM114 63h21v24h-21zM150 48h21v36h-21z" fill="#a0dcb8"/><path d="M42 81h21v24H42zM78 81h21v15H78zM114 87h21v24h-21zM150 84h21v15h-21z" fill="#55ad89"/><path d="M52.500 45v71M88.500 40v82M124.500 37v88M160.500 31v97M45 46h15M81 40h15M117 37h15M153 31h15M45 115h15M81 121h15M117 124h15M153 127h15" stroke="#333" stroke-width="3"/></svg>
      <svg viewBox="0 0 207 156"><path d="M33 27h27v24H33zM75 63h12v24H75zM54 63h9v24h-9zM120 102h21v24h-21zM33 102h6v24h-6z" fill="#cce6db"/><path d="M33 63h18v24H33zM96 63h42v24H96zM90 102h12v24H90z" fill="#e0f2e8"/><path d="M81 27h12v24H81zM129 27h6v24h-6zM153 63h24v24h-24zM78 102h6v24h-6z" fill="#fbdcc0"/><path d="M96 27h12v24H96zM147 27h24v24h-24zM48 102h24v24H48zM159 102h12v24h-12z" fill="#ffecd9"/></svg>
      <svg viewBox="0 0 207 156"><path d="M36 30h120v24H36zM36 66h135v24H36zM36 102h75v24H36z" fill="#f7f7f7"/><path d="M36 36h75v12H36zM36 72h120v12H36zM36 108h63v12H36z" fill="#cce6db"/><path d="M121.500 30v24M142.500 66v24M160.500 102v24" stroke="#bbb" stroke-width="3"/></svg>
      <svg viewBox="0 0 207 156"><g fill="#a0dcb8"><circle cx="67" cy="98" r="29"/><circle cx="127" cy="51" r="9"/></g><g fill="#55ad89"><circle cx="70" cy="56" r="11"/><circle cx="99" cy="48" r="15.500"/><circle cx="111" cy="114" r="13"/></g><g fill="#ffbe7d"><circle cx="113" cy="81" r="17.500"/><circle cx="157" cy="65" r="20.500"/></g><circle cx="141" cy="96" r="12" fill="#f28e2b"/></svg>
    </div>
    <p>누적 막대의 경우 다음 시도:</p>
    <div class="need"><span>1개 이상</span><span class="pill">차원</span></div>
    <div class="need"><span>1개 이상</span><span class="pill green">측정값</span></div>
  </div>
</aside>
</body>
</html>
```
FILE: styles.css
```css
* { box-sizing: border-box; }
body {
  margin: 0; width: 1920px; height: 1020px; overflow: hidden; position: relative;
  display: flex; flex-direction: column; background: #f4f4f4; color: #000;
  font: 350 16px/20px "Noto Sans", "Noto Sans CJK KR", sans-serif; white-space: nowrap; word-spacing: 3px;
}
svg { display: block; flex: none; }
.defs { position: absolute; }
i, em { font-style: normal; }
b { font-weight: 400; }

.titlebar { height: 29px; background: #f2f2f2; display: flex; align-items: center; padding-left: 3px; color: #888; font-size: 15px; word-spacing: 0; }
.titlebar span { margin: -2px 0 0 8px; letter-spacing: -.05px; }
.window-buttons { margin-left: auto; display: flex; gap: 47px; padding-right: 26px; }
.menubar { height: 26px; background: #fff; border-bottom: 1px solid #ececec; display: flex; align-items: center; gap: 16px; padding: 0 0 2px 8px; font-size: 16.200px; color: #8f8f8f; font-weight: 300; }
.banner { height: 50px; background: #cfe9ff; color: #00608e; display: flex; align-items: center; padding: 2px 58px 0 26px; font-size: 16px; word-spacing: 0; }
.banner b { margin-left: 14px; font-weight: 500; letter-spacing: .15px; }
.banner .buy { margin-left: auto; letter-spacing: .5px; word-spacing: 2px; }

.toolbar { height: 50px; display: flex; color: #666; padding-bottom: 2px; }
.group { display: grid; align-items: center; justify-items: center; position: relative; margin-top: 8px; height: 35px; border-right: 1px solid #ccc; }
.g1 { width: 57px; padding-right: 1px; }
.g2 { width: 220px; padding-left: 6px; grid-template-columns: 40px 38px 36px 13px 37px 42px; }
.g3 { width: 151px; padding-left: 7px; grid-template-columns: 36px 12px 38px 38px 10px; }
.g4 { width: 133px; padding-left: 6px; grid-template-columns: 40px 42px 32px; }
.g5 { width: 338px; padding-left: 10px; grid-template-columns: 30px 14px 36px 13px 40px 34px 15px 128px; }
.g6 { width: 104px; padding-left: 12px; grid-template-columns: 28px 14px 40px; }
.group > svg { margin-bottom: 3px; }
.group > .lift { margin-bottom: 6px; }
.dim { color: #aaa; }
.combo { grid-column: 8; width: 128px; height: 28px; margin-bottom: 1px; border: 1px solid #c4c4c4; border-radius: 2px; background: #fafafa; display: flex; align-items: center; justify-content: space-between; padding-left: 8px; color: #222; font-size: 17px; letter-spacing: .6px; }
.combo i { width: 23px; height: 26px; border-left: 1px solid #ddd; display: grid; place-items: center; color: #666; }

.main { height: 802px; display: flex; }
.format { width: 262px; border: 1px solid #d4d4d4; border-left: 0; border-bottom: 0; background: #fafafa; display: flex; flex-direction: column; }
.format-title { height: 31px; border-bottom: 1px solid #d4d4d4; display: flex; align-items: center; justify-content: space-between; padding: 0 6px 1px 22px; font-size: 18px; }
.format-icons { height: 53px; padding: 0 17px 2px 32px; display: flex; align-items: center; }
.format-icons svg:nth-child(2) { margin-left: 18px; }
.format-icons svg:nth-child(3) { margin-left: 16px; }
.format-icons .sel { width: 28px; height: 28px; border: 1px solid #c4c4c4; margin: 0 9px 0 7px; display: grid; place-items: center; }
.format-icons .fields { margin-left: auto; display: flex; align-items: center; gap: 3px; color: #000; }
.format-tabs { height: 28px; display: flex; align-items: flex-end; padding-left: 5px; background: linear-gradient(#aaa, #aaa) 0 100% / 5px 1px no-repeat; }
.format-tabs span { height: 26px; width: 43px; border: 1px solid #e2e2e2; border-left: 0; border-bottom-color: #a5a5a5; background: #f2f2f2; display: grid; place-items: center; }
.format-tabs .on { width: 62px; height: 28px; border-left: 1px solid #e2e2e2; border-bottom: 0; background: #fafafa; padding: 0 2px 2px 0; }
.format-tabs i { flex: 1; border-bottom: 1px solid #a5a5a5; }
.format-body { height: 637px; display: flex; overflow: hidden; }
.format-list { flex: 1; padding: 11px 0 0 22px; }
.format-list h3 { margin: 21px 0 11px; font-size: 17.800px; line-height: 22px; font-weight: inherit; }
.format-list h3:first-child { margin-top: 0; }
.field { display: flex; align-items: center; height: 26px; margin-bottom: 10px; }
.field:has(+ h3) { margin-bottom: 0; }
.field label { width: 93px; text-align: right; margin-right: 4px; }
.level { height: 23px; }
.level svg { margin-left: -1px; }
.select { width: 105px; height: 26px; background: #fff; border: 1px solid #e6e6e6; border-bottom-color: #868686; border-radius: 2px; display: flex; align-items: center; padding: 0 5px 0 2px; }
.select svg { margin-left: auto; }
.select hr { width: 72px; height: 1px; margin: 0 0 0 3px; border: 0; background: #d8d8d8; }
.select hr.mid { background: #c4c4c4; }
.select hr.red { height: 4px; background: #e15759; }
.vscroll { width: 20px; background: #efefef; padding: 21px 0 0 7px; }
.vscroll i { display: block; width: 6px; height: 538px; background: #868686; }
.clear { margin: 9px 16px 0 23px; height: 27px; border: 1px solid #ccc; border-radius: 3px; background: #fdfdfd; display: grid; place-items: center; }

.cards { width: 206px; padding: 0 0 0 6px; display: flex; flex-direction: column; gap: 6px; }
.card { width: 194px; border: 1px solid #d4d4d4; background: #fafafa; padding: 7px 8px 0 7px; color: #222; }
.pages { height: 72px; }
.filters { height: 94px; }
.marks { height: 272px; padding-top: 8px; }
.mark-type { height: 25px; margin-top: 14px; border: 1px solid #c4c4c4; border-radius: 2px; display: flex; align-items: center; padding-left: 12px; font-size: 14px; }
.mark-type > span { margin-left: 7px; }
.mark-type i { margin-left: auto; width: 22px; height: 23px; border-left: 1px solid #ddd; display: grid; place-items: center; color: #666; }
.mark-grid { margin-top: 7px; display: grid; grid-template-columns: 57px 57px 50px; gap: 7px; }
.mark-grid div { height: 52px; border: 1px solid #d4d4d4; display: flex; flex-direction: column; align-items: center; justify-content: space-between; padding: 8px 0 0; font-size: 13.500px; letter-spacing: -.4px; word-spacing: 2px; color: #000; }
.mark-grid svg { color: #555; }
.mark-pill { margin: 17px 4px 0 11px; display: flex; align-items: center; gap: 7px; color: #555; }
.pill { height: 25px; border-radius: 13px; background: #4996b2; color: #fff; padding: 0 14px 4px; display: flex; align-items: center; }
.pill.green { background: #00b180; flex: 0 0 auto; }
.mark-pill .pill { width: 142px; padding-left: 13px; }

.work { width: 1446px; }
.shelf { height: 33px; margin-bottom: 6px; border: 1px solid #d4d4d4; background: #fafafa; display: flex; align-items: center; gap: 2px; }
.shelf.active { border-color: #b0b0b0; }
.shelf-label { width: 143px; height: 31px; border-right: 1px solid #d4d4d4; display: flex; align-items: center; padding: 0 7px 0 7px; gap: 9px; color: #222; }
.active .shelf-label { border-color: #b0b0b0; }
.shelf-label .dim { margin-left: auto; }
.shelf .pill { width: 185px; padding-left: 13px; }
.shelf .picked { border: 1px solid #1b2b4b; justify-content: space-between; padding: 0 16px 4px 12px; }
.picked svg { margin-top: 3px; }

.sheet { height: 718px; border: 1px solid #d4d4d4; background: #fff; overflow: hidden; color: #333; word-spacing: 0; }
.sheet h1 { margin: 14px 0 16px 12px; height: 29px; font: 300 24px/29px "Open Sans", "Noto Sans CJK KR", sans-serif; letter-spacing: 1.300px; color: #222; }
.xtab { position: relative; margin-left: 10px; width: 1423px; height: 544px; overflow: hidden; font: 300 15px/17px "Open Sans", "Noto Sans CJK KR", sans-serif; letter-spacing: .05px; }
.super, .cats { height: 20px; padding-left: 160px; display: flex; align-items: center; letter-spacing: .8px; font-weight: 350; color: #222; }
.super span { width: 1262px; text-align: center; word-spacing: 1px; }
.cats span { flex: none; width: 320px; text-align: center; }
.cats span:last-child { width: 720px; }
.heads { height: 44px; border-bottom: 4px solid #e15759; display: flex; align-items: flex-end; padding-bottom: 2px; letter-spacing: .7px; color: #444; }
.heads b { width: 79px; padding-left: 6px; font-weight: 350; color: #111; }
.heads b + b { width: 82px; padding-left: 7px; }
.heads span { flex: none; width: 80px; text-align: right; padding-right: 4px; }
.heads .first { letter-spacing: .5px; }
.region { display: flex; border-bottom: 0; }
.region > b { width: 78px; padding: 0 0 0 6px; border-bottom: 4px solid #e15759; font-weight: 350; letter-spacing: .6px; color: #111; }
.r { display: flex; height: 21px; border-bottom: 4px solid #e15759; }
.region:nth-child(4) .r:first-child { height: 19px; }
.region:nth-child(4) .r:first-child > *, .region:nth-child(4) > b { line-height: 13px; }
.region:nth-child(7) .r:last-child { height: 20px; }
.r em { width: 83px; padding-left: 8px; color: #555; letter-spacing: .35px; }
.r i { flex: none; width: 80px; padding-right: 5px; text-align: right; color: #111; }
.r:nth-child(even) { background: linear-gradient(#f4f4f4, #f4f4f4) 2px 0 no-repeat; }
.region:nth-child(6) .r:nth-child(odd) { background: linear-gradient(#f4f4f4, #f4f4f4) 2px 0 no-repeat; }
.region:nth-child(6) .r:nth-child(even) { background: none; }
.rule { position: absolute; width: 1px; background: #c8c8c8; bottom: 4px; }
.r1 { left: 160px; top: 0; }
.r2 { left: 480px; top: 20px; }
.r3 { left: 800px; top: 20px; }
.hscroll { margin: 3px 0 0 170px; width: 1262px; height: 20px; background: #efefef; padding: 7px 0 0 21px; }
.hscroll i { display: block; height: 6px; width: 1090px; background: #868686; }

.tabs { height: 37px; background: #e5e5e5; border-top: 1px solid #c8c8c8; display: flex; color: #555; }
.tabs > div { border-right: 1px solid #c8c8c8; display: flex; align-items: center; justify-content: center; }
.tabs .source { width: 163px; justify-content: flex-start; padding-left: 10px; gap: 7px; }
.tabs .tab { width: 59px; word-spacing: 2px; }
.tabs .on { width: 60px; background: #fafafa; }
.tabs .new { width: 32px; }
.status { height: 26px; background: #ebebeb; border-top: 1px solid #c8c8c8; display: flex; align-items: center; padding-left: 3px; font-size: 13.500px; word-spacing: 1.500px; color: #000; }
.s1 { width: 97px; }
.s2 { width: 146px; }
.status-right { margin-left: auto; width: 419px; height: 25px; display: flex; }
.status-right > * { border-left: 1px solid #c8c8c8; }
.status-right i { width: 157px; }
.status-right i:nth-child(2), .status-right i:nth-child(3) { width: 32px; }
.status-right i:nth-child(4) { width: 57px; }
.nav { width: 71px; padding: 8px 0 0 8px; }
.views { flex: 1; padding: 6px 0 0 8px; }

.showme { position: absolute; left: 1661px; top: 110px; width: 255px; height: 753px; filter: drop-shadow(2px 2px 2px rgba(0, 0, 0, .3)); }
.showme-tab { position: relative; z-index: 1; margin-left: 124px; width: 131px; height: 46px; background: #fafafa; border: 1px solid #dcdcdc; border-bottom: 0; display: flex; align-items: center; gap: 6px; padding: 0 0 8px 13px; font-size: 17.800px; }
.showme-body { margin-top: -1px; height: 708px; background: #fafafa; border: 1px solid #dcdcdc; padding: 17px 18px 0 16px; }
.charts { display: grid; grid-template-columns: repeat(3, 69px); gap: 5px 6px; }
.charts svg { width: 69px; height: 52px; background: #fff; outline: 1px solid #dcdcdc; outline-offset: -1px; }
.charts .chosen { outline: 2px solid #df6b34; outline-offset: -2px; }
.mini text { font: 16px "Liberation Sans", sans-serif; fill: #555; word-spacing: 0; }
.showme p { margin: 22px 0 9px 2px; font-size: 15.600px; }
.need { display: flex; align-items: center; margin: 0 0 10px 2px; height: 25px; }
.need span:first-child { width: 64px; font-size: 15.500px; padding-top: 3px; }
.need .pill { width: 60px; padding-left: 14px; }
.need .pill.green { width: 75px; }
```
